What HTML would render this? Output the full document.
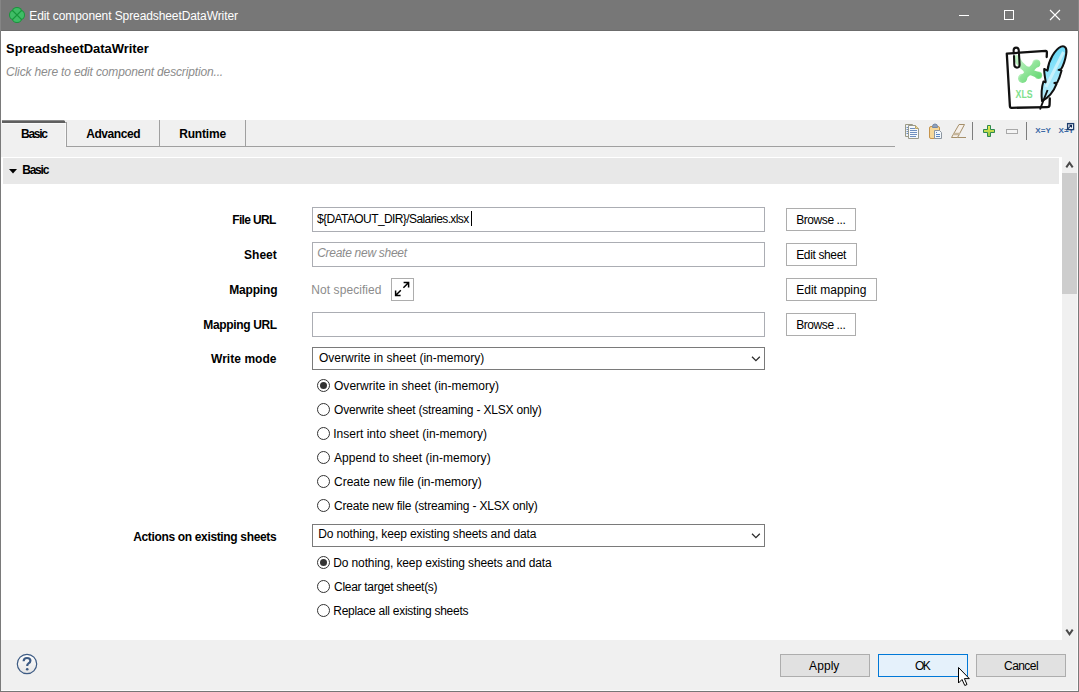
<!DOCTYPE html>
<html><head><meta charset="utf-8">
<style>
*{margin:0;padding:0;box-sizing:border-box}
html,body{width:1079px;height:692px;overflow:hidden;background:#fff}
body{position:relative;font-family:"Liberation Sans",sans-serif;font-size:12px;color:#000}
.a{position:absolute}
.t{position:absolute;white-space:nowrap;line-height:14px;height:14px}
svg{position:absolute;overflow:visible}
.inp{position:absolute;background:#fff;border:1px solid #abadb3;left:312px;width:453px;height:25px}
.cmb{position:absolute;background:#fff;border:1px solid #7a7a7a;left:312px;width:453px;height:23px}
.btn{position:absolute;background:#fff;border:1px solid #adadad;left:786px;height:23px}
.fbtn{position:absolute;background:#e1e1e1;border:1px solid #adadad;top:654px;height:23px;width:90px}
.radio{position:absolute;left:317px;width:13px;height:13px;border:1px solid #333;border-radius:50%;background:#fff}
.radio.on::after{content:"";position:absolute;left:2px;top:2px;width:7px;height:7px;border-radius:50%;background:#333}
</style></head><body>
<!-- frame -->
<div class="a" style="left:0;top:0;width:1079px;height:31px;background:#777777"></div>
<div class="a" style="left:0;top:30px;width:1079px;height:1px;background:#6c6c6c"></div>
<div class="a" style="left:1px;top:31px;width:1077px;height:89px;background:#fff"></div>
<div class="a" style="left:1px;top:120px;width:1077px;height:37px;background:#f0f0f0"></div>
<div class="a" style="left:2px;top:157px;width:1060px;height:483px;background:#fff"></div>
<div class="a" style="left:3px;top:158px;width:1056px;height:26px;background:#e8e8e8"></div>
<div class="a" style="left:1062px;top:157px;width:15px;height:483px;background:#f0f0f0"></div>
<div class="a" style="left:1062px;top:173px;width:15px;height:121px;background:#cdcdcd"></div>
<div class="a" style="left:1px;top:640px;width:1077px;height:51px;background:#f0f0f0"></div>
<div class="a" style="left:1077px;top:120px;width:1px;height:571px;background:#fbfbfb"></div>
<div class="a" style="left:1px;top:690px;width:1077px;height:1px;background:#fbfbfb"></div>
<div class="a" style="left:0;top:0;width:1px;height:31px;background:#858585"></div>
<div class="a" style="left:0;top:31px;width:1px;height:661px;background:#7a7a7a"></div>
<div class="a" style="left:1078px;top:0;width:1px;height:31px;background:#858585"></div>
<div class="a" style="left:1078px;top:31px;width:1px;height:661px;background:#7a7a7a"></div>
<div class="a" style="left:0;top:691px;width:1079px;height:1px;background:#767676"></div>

<!-- title icon -->
<svg style="left:9px;top:7px" width="16" height="16" viewBox="0 0 16 16">
 <g fill="#17963b"><ellipse cx="8" cy="4.4" rx="5" ry="4.4"/><ellipse cx="8" cy="11.6" rx="5" ry="4.4"/><ellipse cx="4.4" cy="8" rx="4.4" ry="5"/><ellipse cx="11.6" cy="8" rx="4.4" ry="5"/></g>
 <g fill="#3fbc66"><ellipse cx="8" cy="4.5" rx="4.1" ry="3.5"/><ellipse cx="8" cy="11.5" rx="4.1" ry="3.5"/><ellipse cx="4.5" cy="8" rx="3.5" ry="4.1"/><ellipse cx="11.5" cy="8" rx="3.5" ry="4.1"/></g>
 <path d="M3 3 L13 13 M13 3 L3 13" stroke="#17963b" stroke-width="1.1"/>
</svg>
<!-- window controls -->
<div class="a" style="left:959px;top:15px;width:10px;height:1px;background:#fff"></div>
<div class="a" style="left:1004px;top:10px;width:10px;height:10px;border:1px solid #fff"></div>
<svg style="left:1050px;top:10px" width="10" height="10" viewBox="0 0 10 10"><path d="M0 0L10 10M10 0L0 10" stroke="#fff" stroke-width="1.1"/></svg>

<!-- header icon -->
<svg style="left:1000px;top:40px" width="75" height="75" viewBox="0 0 75 75">
 <defs>
  <linearGradient id="fg" x1="0" y1="0" x2="0.3" y2="1"><stop offset="0" stop-color="#4fd3f7"/><stop offset="0.45" stop-color="#86e1fa"/><stop offset="1" stop-color="#c8f0fc"/></linearGradient>
  <linearGradient id="mg" x1="0" y1="0" x2="1" y2="1"><stop offset="0" stop-color="#c2f3c6"/><stop offset="1" stop-color="#6ad977"/></linearGradient>
 </defs>
 <path d="M46.7 17 L46.9 12.6 Q46.9 10.9 45.6 10.9 L6.8 13.6 L9.9 66 Q9.9 67.8 11.6 67.8 L47.2 67.2 Q49.6 67.2 49.6 64.5 L49.8 58.5" fill="#fff" stroke="#111" stroke-width="2.3" stroke-linejoin="round" stroke-linecap="round"/>
 <g fill="url(#mg)">
  <circle cx="36.3" cy="23.6" r="4"/><circle cx="22.6" cy="38.3" r="4.6"/><circle cx="38.4" cy="35.2" r="3.7"/>
  <ellipse cx="28.5" cy="31" rx="5" ry="4.5"/>
 </g>
 <path d="M16.5 18 Q22 30 38.4 35.2 M36.3 23.6 Q30 31 22.6 38.3" fill="none" stroke="url(#mg)" stroke-width="6" stroke-linecap="round"/>
 <text x="15.6" y="58.3" font-family="Liberation Sans" font-weight="bold" font-size="11.5" fill="#7ee08c" textLength="17" lengthAdjust="spacingAndGlyphs">XLS</text>
 <path d="M13.8 13.5 L13.6 10.5 Q13.6 7.6 16.2 7.6 Q18.6 7.6 18.8 10.5 L19.6 24.5 Q19.7 27.6 17 27.6 Q14.4 27.6 14.3 24.8 L14 16" fill="none" stroke="#111" stroke-width="2.1" stroke-linecap="round"/>
 <path d="M42 61 C41 52 42 46 43.4 41.5 L45.8 42.4 C45 37 44 33 44.2 29 L47.5 30.6 C48.5 20 55 9.5 61 6.6 C65 5.3 67.3 8 66.2 14 C65.2 20 63.4 25.5 61 29.3 L58.6 29.9 L61.6 30.6 C60.2 36 58.6 40 57.2 42.6 L54.4 43 L56.6 43.9 C53.4 52 48.2 58 42 61 Z" fill="url(#fg)" stroke="#111" stroke-width="2" stroke-linejoin="round"/>
 <path d="M46 47 L63.5 12" stroke="#d6f5fd" stroke-width="3" opacity="0.8"/>
 <path d="M47.6 50 Q43.5 60 40 69.5" fill="none" stroke="#111" stroke-width="1.9"/>
</svg>
<!-- tabs -->
<div class="a" style="left:2px;top:120px;width:62px;height:1px;background:#8a8a8a"></div>
<div class="a" style="left:2px;top:121px;width:63px;height:2px;background:#5f5f5f"></div>
<div class="a" style="left:64px;top:120px;width:1px;height:1px;background:#c4c4c4"></div>
<div class="a" style="left:65px;top:122px;width:1px;height:1px;background:#9a9a9a"></div>
<div class="a" style="left:2px;top:123px;width:63px;height:1px;background:#f9f9f9"></div>
<div class="a" style="left:65px;top:123px;width:1px;height:23px;background:#f9f9f9"></div>
<div class="a" style="left:66px;top:122px;width:1px;height:25px;background:#a0a0a0"></div>
<div class="a" style="left:66px;top:146px;width:829px;height:1px;background:#a0a0a0"></div>
<div class="a" style="left:159px;top:120px;width:1px;height:27px;background:#a0a0a0"></div>
<div class="a" style="left:245px;top:120px;width:1px;height:27px;background:#a0a0a0"></div>

<!-- toolbar icons -->
<svg style="left:904px;top:123px" width="16" height="17" viewBox="0 0 16 17">
 <path d="M1.5 1.5 H8.5 L9.5 2.5 V13.5 H1.5 Z" fill="#eef3f8" stroke="#9c9a86"/>
 <path d="M2.5 4.5H4M2.5 6.5H4M2.5 8.5H4M2.5 10.5H4" stroke="#6f8fbf"/>
 <path d="M4.5 2.5 H11.5 L14.5 5.5 V15.5 H4.5 Z" fill="#f5f9fc" stroke="#9a9a8c"/>
 <path d="M11.5 2.5 V5.5 H14.5" fill="#f0d890" stroke="#b9a56a"/>
 <path d="M6 5.5H11M6 7.5H13M6 9.5H13M6 11.5H13M6 13.5H12" stroke="#6f8fbf"/>
</svg>
<svg style="left:928px;top:123px" width="16" height="17" viewBox="0 0 16 17">
 <rect x="1.5" y="3.5" width="10" height="12" rx="1.5" fill="#f6d89a" stroke="#c6944c"/>
 <path d="M4.5 3.5 Q4.5 1 7 1 Q9.5 1 9.5 3.5 V4.5 H4.5 Z" fill="#8fa0ba" stroke="#7488a6"/>
 <path d="M6.5 7.5 H11.5 L13.5 9.5 V15.5 H6.5 Z" fill="#f2f7fb" stroke="#8d96a0"/>
 <path d="M8 9.5H9M8 11.5H12M8 13.5H12" stroke="#5c87c2"/>
</svg>
<svg style="left:950px;top:123px" width="17" height="16" viewBox="0 0 17 16">
 <path d="M1.5 14.5 L9 1.5 H14.5 L7.5 14.5 Z" fill="#f6f0ea" stroke="#a58f6a"/>
 <path d="M3.5 11 H10" stroke="#c7b79c" stroke-width="2.5"/>
 <path d="M7.5 14.5 H16" stroke="#a58f6a"/>
</svg>
<div class="a" style="left:972px;top:122px;width:1px;height:18px;background:#7d7d7d"></div>
<svg style="left:982px;top:124px" width="14" height="14" viewBox="0 0 14 14">
 <defs><linearGradient id="pg" x1="0" y1="0" x2="0" y2="1"><stop offset="0" stop-color="#f2f256"/><stop offset="1" stop-color="#8fc440"/></linearGradient></defs>
 <path d="M5.5 1.5 H8.5 V5.5 H12.5 V8.5 H8.5 V12.5 H5.5 V8.5 H1.5 V5.5 H5.5 Z" fill="url(#pg)" stroke="#2f8a4e"/>
</svg>
<div class="a" style="left:1006px;top:129px;width:12px;height:5px;border:1px solid #a9a9a9;background:#f4f4f4"></div>
<div class="a" style="left:1026px;top:122px;width:1px;height:18px;background:#7d7d7d"></div>
<svg style="left:1035px;top:126px" width="17" height="8" viewBox="0 0 17 8">
 <text x="0.3" y="6.6" font-family="Liberation Sans" font-weight="bold" font-size="7" fill="#3b69a6" textLength="15.5" lengthAdjust="spacingAndGlyphs">X=Y</text>
</svg>
<svg style="left:1058px;top:121px" width="18" height="14" viewBox="0 0 18 14">
 <text x="0.5" y="11.6" font-family="Liberation Sans" font-weight="bold" font-size="7" fill="#3b69a6" textLength="15.5" lengthAdjust="spacingAndGlyphs">X=Y</text>
 <rect x="9.6" y="2.6" width="6" height="6" fill="#f4f8fc" stroke="#1f3f6e" stroke-width="1.3"/>
 <path d="M8.3 9.3 L13 4.6" stroke="#1f3f6e" stroke-width="1.1"/>
 <path d="M10.8 3.8 H14 V7 Z" fill="#0f2550"/>
</svg>

<!-- section arrow -->
<svg style="left:9px;top:169px" width="8" height="5" viewBox="0 0 8 5"><path d="M0 0 H8 L4 4.5 Z" fill="#000"/></svg>

<!-- scroll arrows -->
<svg style="left:1065px;top:161px" width="9" height="8" viewBox="0 0 9 8"><path d="M1.3 6.4 L4.5 1.7 L7.7 6.4" fill="none" stroke="#4a4a4a" stroke-width="2"/></svg>
<svg style="left:1065px;top:628px" width="9" height="8" viewBox="0 0 9 8"><path d="M1.3 1.6 L4.5 6.3 L7.7 1.6" fill="none" stroke="#4a4a4a" stroke-width="2"/></svg>

<!-- form controls -->
<div class="inp" style="top:207px"></div>
<div class="inp" style="top:242px"></div>
<div class="a" style="left:391px;top:278px;width:23px;height:23px;border:1px solid #adadad;background:#fff"></div>
<svg style="left:391px;top:278px" width="23" height="23" viewBox="0 0 23 23">
 <path d="M12.6 4.6 H17.6 V9.4 M17.4 4.8 L12.4 9.8 M4.6 12.4 V17.4 H9.6 M4.8 17.2 L9.8 12.2" fill="none" stroke="#000" stroke-width="1.5"/>
</svg>
<div class="inp" style="top:312px"></div>
<div class="cmb" style="top:347px"></div>
<svg style="left:751px;top:356px" width="10" height="6" viewBox="0 0 10 6"><path d="M1 0.8 L4.9 4.7 L8.8 0.8" fill="none" stroke="#2a2a2a" stroke-width="1.25"/></svg>
<div class="cmb" style="top:524px"></div>
<svg style="left:751px;top:533px" width="10" height="6" viewBox="0 0 10 6"><path d="M1 0.8 L4.9 4.7 L8.8 0.8" fill="none" stroke="#2a2a2a" stroke-width="1.25"/></svg>
<div class="a" style="left:471px;top:211px;width:1px;height:15px;background:#000"></div>

<div class="btn" style="top:208px;width:70px"></div>
<div class="btn" style="top:243px;width:71px"></div>
<div class="btn" style="top:278px;width:91px"></div>
<div class="btn" style="top:313px;width:70px"></div>

<div class="radio on" style="top:379px"></div>
<div class="radio" style="top:403px"></div>
<div class="radio" style="top:427px"></div>
<div class="radio" style="top:451px"></div>
<div class="radio" style="top:475px"></div>
<div class="radio" style="top:499px"></div>
<div class="radio on" style="top:556px"></div>
<div class="radio" style="top:580px"></div>
<div class="radio" style="top:604px"></div>

<!-- footer -->
<svg style="left:16px;top:653px" width="22" height="22" viewBox="0 0 22 22">
 <defs><linearGradient id="hg" x1="0" y1="0" x2="0" y2="1"><stop offset="0" stop-color="#ffffff"/><stop offset="1" stop-color="#e4e4e4"/></linearGradient></defs>
 <circle cx="11" cy="11" r="9.7" fill="url(#hg)" stroke="#3d5b84" stroke-width="1.2"/>
 <path d="M7.6 8.2 Q7.8 5 11 5 Q14.4 5 14.4 7.8 Q14.4 9.6 12.3 10.6 Q11.2 11.2 11.2 13" fill="none" stroke="#3d5b84" stroke-width="2.2"/>
 <circle cx="11.2" cy="16.3" r="1.3" fill="#3d5b84"/>
</svg>
<div class="fbtn" style="left:780px"></div>
<div class="fbtn" style="left:878px;background:#e5f1fb;border-color:#0078d7"></div>
<div class="fbtn" style="left:976px"></div>
<svg style="left:957px;top:666px" width="14" height="21" viewBox="0 0 14 21">
 <path d="M1.5 1.5 V17 L5 13.5 L7.8 19.5 L10 18.5 L7.4 12.6 H12.3 Z" fill="#fff" stroke="#000" stroke-width="1" stroke-linejoin="miter"/>
</svg>

<div class="t" id="title" style="left:29.30px;top:8.50px;color:#ffffff;font-size:12px;letter-spacing:-0.091px">Edit component SpreadsheetDataWriter</div>
<div class="t" id="sdw" style="left:6.10px;top:41.50px;color:#000000;font-size:13px;letter-spacing:-0.040px;font-weight:bold">SpreadsheetDataWriter</div>
<div class="t" id="desc" style="left:6.10px;top:64.50px;color:#8c8c8c;font-size:12px;letter-spacing:-0.152px;font-style:italic">Click here to edit component description...</div>
<div class="t" id="tab1" style="left:21.10px;top:127.00px;color:#000000;font-size:12px;letter-spacing:-1.300px;font-weight:bold">Basic</div>
<div class="t" id="tab2" style="left:86.14px;top:127.00px;color:#000000;font-size:12px;letter-spacing:-0.400px;font-weight:bold">Advanced</div>
<div class="t" id="tab3" style="left:179.20px;top:127.00px;color:#000000;font-size:12px;letter-spacing:-0.173px;font-weight:bold">Runtime</div>
<div class="t" id="sect" style="left:22.22px;top:162.50px;color:#000000;font-size:12px;letter-spacing:-1.220px;font-weight:bold">Basic</div>
<div class="t" id="l1" style="left:232.20px;top:212.50px;color:#000000;font-size:12px;letter-spacing:-0.629px;font-weight:bold">File URL</div>
<div class="t" id="l2" style="left:244.10px;top:247.50px;color:#000000;font-size:12px;letter-spacing:0.000px;font-weight:bold">Sheet</div>
<div class="t" id="l3" style="left:229.24px;top:282.50px;color:#000000;font-size:12px;letter-spacing:-0.173px;font-weight:bold">Mapping</div>
<div class="t" id="l4" style="left:203.24px;top:317.50px;color:#000000;font-size:12px;letter-spacing:-0.344px;font-weight:bold">Mapping URL</div>
<div class="t" id="l5" style="left:211.00px;top:352.00px;color:#000000;font-size:12px;letter-spacing:0.044px;font-weight:bold">Write mode</div>
<div class="t" id="l6" style="left:133.16px;top:529.50px;color:#000000;font-size:12px;letter-spacing:-0.342px;font-weight:bold">Actions on existing sheets</div>
<div class="t" id="v1" style="left:317.00px;top:211.50px;color:#000000;font-size:12px;letter-spacing:-0.593px">${DATAOUT_DIR}/Salaries.xlsx</div>
<div class="t" id="v2" style="left:317.20px;top:246.00px;color:#8c8c8c;font-size:12px;letter-spacing:-0.277px;font-style:italic">Create new sheet</div>
<div class="t" id="v3" style="left:311.36px;top:283.00px;color:#8c8c8c;font-size:12px;letter-spacing:0.060px">Not specified</div>
<div class="t" id="c1" style="left:319.00px;top:350.50px;color:#000000;font-size:12px;letter-spacing:0.019px">Overwrite in sheet (in-memory)</div>
<div class="t" id="c2" style="left:318.20px;top:527.00px;color:#000000;font-size:12px;letter-spacing:-0.132px">Do nothing, keep existing sheets and data</div>
<div class="t" id="b1" style="left:796.20px;top:212.50px;color:#000000;font-size:12px;letter-spacing:-0.418px">Browse ...</div>
<div class="t" id="b2" style="left:796.20px;top:247.50px;color:#000000;font-size:12px;letter-spacing:-0.364px">Edit sheet</div>
<div class="t" id="b3" style="left:796.20px;top:282.50px;color:#000000;font-size:12px;letter-spacing:0.015px">Edit mapping</div>
<div class="t" id="b4" style="left:796.20px;top:317.50px;color:#000000;font-size:12px;letter-spacing:-0.418px">Browse ...</div>
<div class="t" id="r1" style="left:334.04px;top:378.50px;color:#000000;font-size:12px;letter-spacing:0.006px">Overwrite in sheet (in-memory)</div>
<div class="t" id="r2" style="left:334.04px;top:402.50px;color:#000000;font-size:12px;letter-spacing:-0.183px">Overwrite sheet (streaming - XLSX only)</div>
<div class="t" id="r3" style="left:333.24px;top:426.50px;color:#000000;font-size:12px;letter-spacing:0.014px">Insert into sheet (in-memory)</div>
<div class="t" id="r4" style="left:334.04px;top:450.50px;color:#000000;font-size:12px;letter-spacing:0.046px">Append to sheet (in-memory)</div>
<div class="t" id="r5" style="left:334.04px;top:474.50px;color:#000000;font-size:12px;letter-spacing:-0.015px">Create new file (in-memory)</div>
<div class="t" id="r6" style="left:334.04px;top:498.50px;color:#000000;font-size:12px;letter-spacing:-0.185px">Create new file (streaming - XLSX only)</div>
<div class="t" id="r7" style="left:333.24px;top:555.50px;color:#000000;font-size:12px;letter-spacing:-0.126px">Do nothing, keep existing sheets and data</div>
<div class="t" id="r8" style="left:334.04px;top:579.50px;color:#000000;font-size:12px;letter-spacing:-0.292px">Clear target sheet(s)</div>
<div class="t" id="r9" style="left:333.24px;top:603.50px;color:#000000;font-size:12px;letter-spacing:-0.262px">Replace all existing sheets</div>
<div class="t" id="f1" style="left:809.10px;top:659.10px;color:#000000;font-size:12px;letter-spacing:0.060px">Apply</div>
<div class="t" id="f2" style="left:915.10px;top:658.50px;color:#000000;font-size:12px;letter-spacing:-1.600px">OK</div>
<div class="t" id="f3" style="left:1004.08px;top:658.50px;color:#000000;font-size:12px;letter-spacing:-0.576px">Cancel</div>
</body></html>
